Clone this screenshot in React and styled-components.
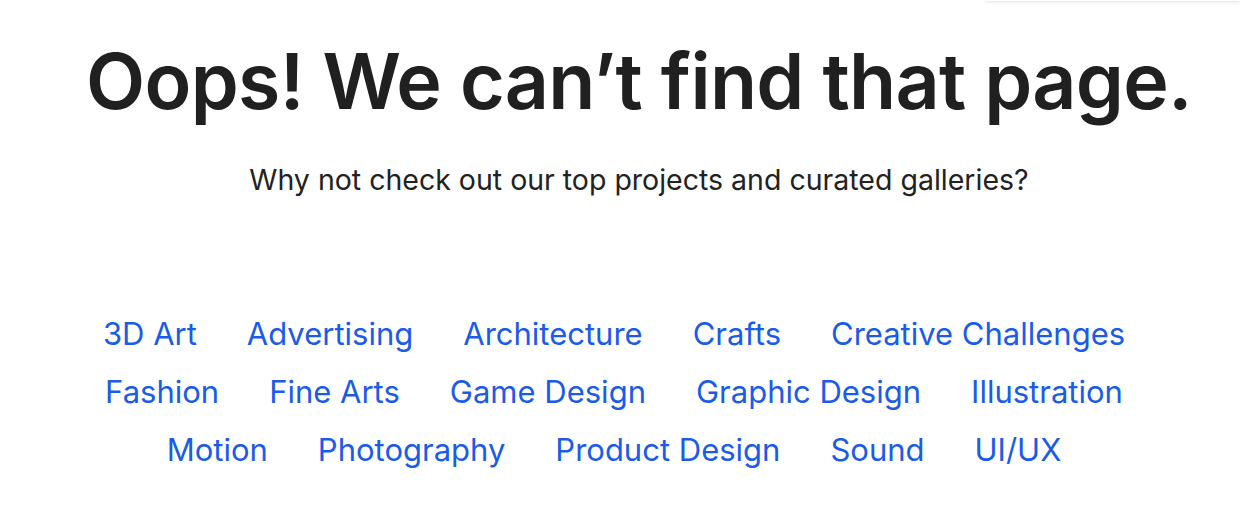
import React from 'react';
import styled, { createGlobalStyle } from 'styled-components';

const GlobalStyle = createGlobalStyle`
  body {
    margin: 0;
    background: #fff;
    font-family: Inter, "Liberation Sans", Arial, sans-serif;
  }
`;

const Page = styled.main`
  position: relative;
  display: flex;
  flex-direction: column;
  align-items: center;
  padding: 34px 0 40px 38px;
  overflow: hidden;
`;

const TopShadow = styled.div`
  position: absolute;
  top: -20px;
  right: 0;
  width: 255px;
  height: 21px;
  background: #fff;
  box-shadow: 0 1px 3px rgba(0, 0, 0, 0.12);
`;

const Title = styled.h1`
  margin: 0;
  font-size: 77px;
  line-height: 94px;
  font-weight: 600;
  letter-spacing: -0.7px;
  color: #202020;
`;

const Subtitle = styled.p`
  margin: 34px 0 0;
  font-size: 28.5px;
  line-height: 36px;
  color: #222;
`;

const Categories = styled.ul`
  display: flex;
  flex-wrap: wrap;
  justify-content: center;
  width: 1110px;
  margin: 118px 0 0;
  padding: 0;
  list-style: none;
  row-gap: 22px;
`;

const Category = styled.li`
  margin-right: 50px;
  font-size: 31px;
  line-height: 36px;

  a {
    color: #1a5be8;
    text-decoration: none;
  }
`;

const categories = [
  '3D Art',
  'Advertising',
  'Architecture',
  'Crafts',
  'Creative Challenges',
  'Fashion',
  'Fine Arts',
  'Game Design',
  'Graphic Design',
  'Illustration',
  'Motion',
  'Photography',
  'Product Design',
  'Sound',
  'UI/UX',
];

const App = () => (
  <>
    <GlobalStyle />
    <Page>
      <TopShadow />
      <Title>Oops! We can’t find that page.</Title>
      <Subtitle>Why not check out our top projects and curated galleries?</Subtitle>
      <Categories>
        {categories.map(name => (
          <Category key={name}>
            <a href="#">{name}</a>
          </Category>
        ))}
      </Categories>
    </Page>
  </>
);

export default App;
